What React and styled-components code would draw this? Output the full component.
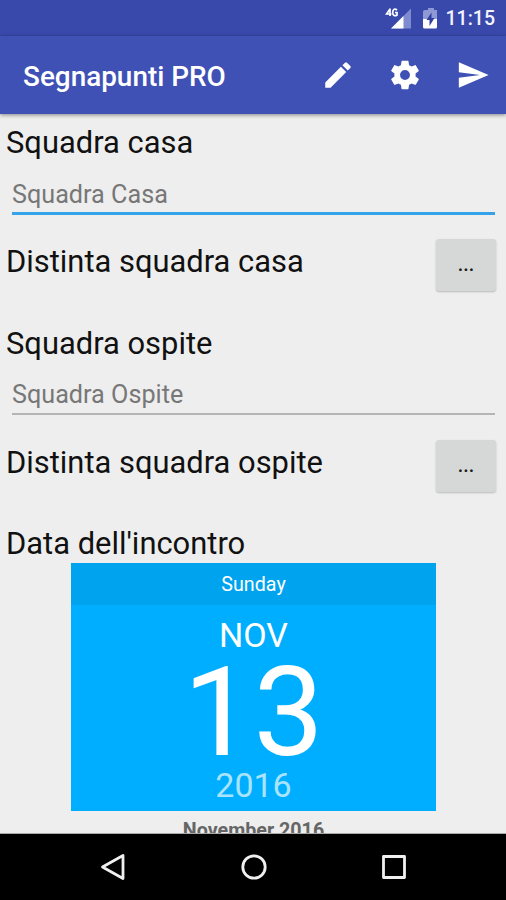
import React from "react";
import styled, { createGlobalStyle } from "styled-components";

const GlobalStyle = createGlobalStyle`
  * { box-sizing: border-box; }
  body { margin: 0; background: #eeeeee; font-family: Roboto, sans-serif; }
`;

const Screen = styled.div`
  width: 506px;
  height: 900px;
  display: flex;
  flex-direction: column;
  overflow: hidden;
  background: #eeeeee;
`;

const StatusBar = styled.div`
  height: 36px;
  flex: none;
  display: flex;
  align-items: flex-start;
  justify-content: flex-end;
  padding: 4px 11px 0 0;
  background: #3949ab;
`;

const StatusIcons = styled.svg`
  width: 56px;
  height: 26px;
  margin-right: 5px;
`;

const Clock = styled.span`
  padding-top: 2px;
  font-size: 19.5px;
  line-height: 26px;
  font-weight: 500;
  color: #f2f3fb;
`;

const Toolbar = styled.header`
  height: 78px;
  flex: none;
  display: flex;
  align-items: center;
  padding-left: 23px;
  background: #3f51b5;
  box-shadow: 0 1px 4px rgba(0, 0, 0, 0.45);
  z-index: 1;
`;

const Title = styled.h1`
  margin: 4px auto 0 0;
  font-size: 27.9px;
  line-height: 34px;
  font-weight: 500;
  color: #ffffff;
`;

const ActionButton = styled.button`
  width: 67.5px;
  height: 78px;
  padding: 0 0 0 1px;
  border: 0;
  background: none;
  display: flex;
  align-items: center;
  justify-content: center;
  svg { width: 34px; height: 34px; fill: #ffffff; }
`;

const Content = styled.main`
  flex: 1;
  min-height: 0;
  overflow: hidden;
  padding: 11px 10px 0 6px;
  border-bottom: 1px solid #a8a8a8;
`;

const TeamSection = styled.section`
  height: ${(p) => (p.$last ? 200 : 201)}px;
`;

const Label = styled.div`
  height: 36px;
  line-height: 36px;
  font-size: 30.9px;
  color: #111111;
  white-space: nowrap;
`;

const Field = styled.input`
  display: block;
  width: 483px;
  height: ${(p) => (p.$active ? 54 : 53)}px;
  margin: 0 0 ${(p) => (p.$active ? 0 : 1)}px 6px;
  padding: ${(p) => (p.$active ? 15 : 14)}px 0 0;
  border: 0;
  border-bottom: ${(p) => (p.$active ? "3px solid #35a3e9" : "2px solid #b5b5b5")};
  border-radius: 0;
  outline: 0;
  background: none;
  font: 25.2px Roboto, sans-serif;
  &::placeholder { color: #777777; opacity: 1; }
`;

const ListRow = styled.div`
  display: flex;
  justify-content: space-between;
  padding-top: 29px;
`;

const MoreButton = styled.button`
  width: 60px;
  height: 52px;
  margin: -5px 0 0;
  padding: 0;
  border: 0;
  border-radius: 3px;
  background: #d6d8d7;
  box-shadow: 0 1px 2px rgba(0, 0, 0, 0.22);
  font: 500 19.7px/52px Roboto, sans-serif;
  color: #1c1c1c;
`;

const DatePicker = styled.div`
  width: 365px;
  margin: 1px 0 0 65px;
  text-align: center;
`;

const DateCard = styled.div`
  height: 248px;
  background: #00aeff;
  color: #ffffff;
`;

const Weekday = styled.div`
  height: 42px;
  line-height: 43px;
  font-size: 19.7px;
  background: #00a3ee;
`;

const Month = styled.div`
  height: 60px;
  line-height: 61px;
  font-size: 34px;
`;

const Day = styled.div`
  height: 94px;
  line-height: 95px;
  font-size: 125px;
`;

const Year = styled.div`
  height: 52px;
  line-height: 53px;
  font-size: 34px;
  color: #a9e4ff;
`;

const MonthHeading = styled.div`
  padding-top: 8px;
  line-height: 24px;
  font-size: 19.7px;
  font-weight: 700;
  color: #666666;
`;

const NavBar = styled.nav`
  height: 66px;
  flex: none;
  display: flex;
  align-items: center;
  justify-content: space-between;
  padding: 0 96px 0 97px;
  background: #000000;
  svg { width: 32px; height: 32px; fill: none; stroke: #f0f0f0; stroke-width: 2.8; stroke-linejoin: round; }
`;

function Action({ label, d }) {
  return (
    <ActionButton aria-label={label}>
      <svg viewBox="0 0 24 24"><path d={d} /></svg>
    </ActionButton>
  );
}

function Team({ name, hint, list, active, last }) {
  return (
    <TeamSection $last={last}>
      <Label>{name}</Label>
      <Field placeholder={hint} $active={active} />
      <ListRow>
        <Label>{list}</Label>
        <MoreButton>...</MoreButton>
      </ListRow>
    </TeamSection>
  );
}

export default function App() {
  return (
    <>
      <GlobalStyle />
      <Screen>
        <StatusBar>
          <StatusIcons viewBox="0 0 56 26">
            <path d="M26 4.500V24.500H6z" fill="#7f8bcf" />
            <path d="M18.500 12v12.500H6z" fill="#fff" />
            <path d="M5 5L1.500 10h5M5 4.500v7.500M12 6C9.500 4 7.700 5.500 7.700 8.500s2.300 4 4.300 2.500V8.500h-2" fill="none" stroke="#fff" strokeWidth="1.7" />
            <path d="M40 6h3V4h6v2h3v9H38V8q0-2 2-2z" fill="#8d98d5" />
            <path d="M38 15h14v8q0 1.500-1.500 1.500h-11Q38 24.500 38 23z" fill="#fff" />
            <path d="M46.500 8.500l-5 7.500h3v6l5-8h-3z" fill="#303f9f" />
          </StatusIcons>
          <Clock>11:15</Clock>
        </StatusBar>
        <Toolbar>
          <Title>Segnapunti PRO</Title>
          <Action label="Modifica" d="M3 17.25V21h3.75L17.81 9.94l-3.75-3.75L3 17.25zM20.71 7.04a1 1 0 0 0 0-1.41l-2.34-2.34a1 1 0 0 0-1.41 0l-1.83 1.83 3.75 3.75 1.83-1.83z" />
          <Action label="Impostazioni" d="M19.43 12.98c.04-.32.07-.64.07-.98s-.03-.66-.07-.98l2.11-1.65c.19-.15.24-.42.12-.64l-2-3.46c-.12-.22-.39-.3-.61-.22l-2.49 1c-.52-.4-1.08-.73-1.69-.98l-.38-2.65A.49.49 0 0 0 14 2h-4c-.25 0-.46.18-.49.42l-.38 2.65c-.61.25-1.17.59-1.69.98l-2.49-1c-.23-.09-.49 0-.61.22l-2 3.46c-.13.22-.07.49.12.64l2.11 1.65c-.04.32-.07.65-.07.98s.03.66.07.98l-2.11 1.65c-.19.15-.24.42-.12.64l2 3.46c.12.22.39.3.61.22l2.49-1c.52.4 1.08.73 1.69.98l.38 2.65c.03.24.24.42.49.42h4c.25 0 .46-.18.49-.42l.38-2.65c.61-.25 1.17-.59 1.69-.98l2.49 1c.23.09.49 0 .61-.22l2-3.46c.12-.22.07-.49-.12-.64l-2.11-1.65zM12 15.5A3.5 3.5 0 1 1 12 8.5a3.5 3.5 0 0 1 0 7z" />
          <Action label="Invia" d="M2.01 21L23 12 2.01 3 2 10l15 2-15 2z" />
        </Toolbar>
        <Content>
          <Team name="Squadra casa" hint="Squadra Casa" list="Distinta squadra casa" active />
          <Team name="Squadra ospite" hint="Squadra Ospite" list="Distinta squadra ospite" last />
          <Label>Data dell'incontro</Label>
          <DatePicker>
            <DateCard>
              <Weekday>Sunday</Weekday>
              <Month>NOV</Month>
              <Day>13</Day>
              <Year>2016</Year>
            </DateCard>
            <MonthHeading>November 2016</MonthHeading>
          </DatePicker>
        </Content>
        <NavBar>
          <svg viewBox="0 0 32 32"><path d="M26 4.5v23L5.5 16z" /></svg>
          <svg viewBox="0 0 32 32"><circle cx="16" cy="16" r="11.2" /></svg>
          <svg viewBox="0 0 32 32"><rect x="5.5" y="5.5" width="21" height="21" /></svg>
        </NavBar>
      </Screen>
    </>
  );
}
